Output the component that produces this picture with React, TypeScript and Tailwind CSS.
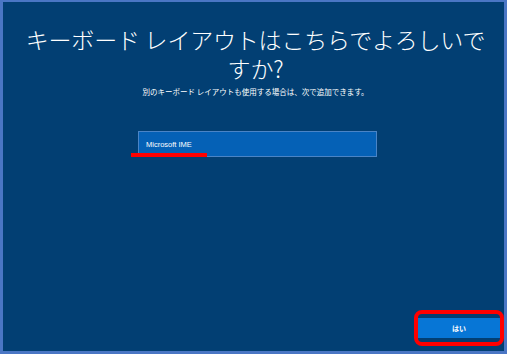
export default function App() {
  const jp = { fontFamily: '"Noto Sans CJK JP", "Noto Sans", sans-serif' };
  return (
    <div className="w-[507px] h-[354px] bg-[#4a76c4] pt-[2px] pl-[3px] pr-[3px] pb-[3px]" style={jp}>
      <div className="w-full h-full bg-[#023f73] flex flex-col items-center">
        <div className="pt-[23px] pl-[4px] text-white text-[23px] leading-[28.5px] font-light text-center tracking-[-0.2px] whitespace-nowrap">
          キーボード レイアウトはこちらでよろしいで
          <br />
          すか?
        </div>
        <div className="mt-[5px] pl-[4px] text-white text-[7.5px] leading-[10px] text-center">
          別のキーボード レイアウトも使用する場合は、次で追加できます。
        </div>
        <div className="mt-[34px] ml-[8px] relative w-[239px] h-[26px] bg-[#0561b6] border border-[#4a84c6] flex items-center pl-[7px] pt-[2px]">
          <span className="text-white text-[7.5px]" style={{ fontFamily: '"Liberation Sans", sans-serif' }}>
            Microsoft IME
          </span>
          <div className="absolute left-[-8px] top-[21px] w-[76px] h-[3.5px] bg-[#ff0000]" />
        </div>
        <div className="flex-1" />
        <div className="w-full flex justify-end pb-[5px]">
          <div className="w-[90px] h-[36px] border-[4px] border-[#ff0000] rounded-[8px] py-[4px]">
            <div className="w-full h-full bg-[#0776d6] flex items-center justify-center text-white text-[7px] font-bold">
              はい
            </div>
          </div>
        </div>
      </div>
    </div>
  );
}
